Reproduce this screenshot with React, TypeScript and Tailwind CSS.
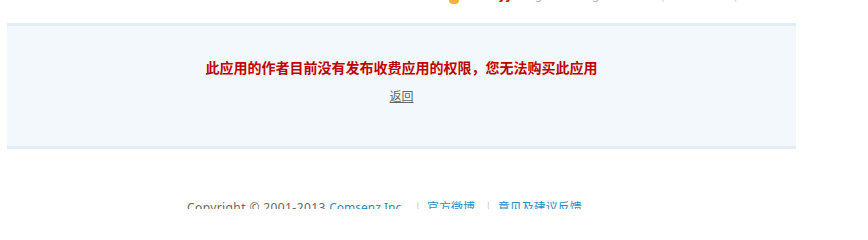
const cjk = { fontFamily: '"Noto Sans", "Noto Sans CJK SC", sans-serif' };

export default function App() {
  return (
    <div className="w-[868px] h-[209px] overflow-hidden bg-white" style={cjk}>
      {/* cut-off toolbar row above */}
      <div className="h-[5px] overflow-hidden">
        <div className="-mt-[14px] flex items-end text-[12px] leading-[18px] text-[#bbb]">
          <span className="ml-[449px] inline-block w-[10px] h-[10px] rounded-sm bg-[#f0b43c]" />
          <span className="ml-[40px] font-bold text-[#c00]">yy</span>
          <span className="ml-[22px]">g</span>
          <span className="ml-[50px]">g</span>
          <span className="ml-[60px] text-[#ccc]">|</span>
          <span className="ml-[66px] text-[#ccc]">|</span>
        </div>
      </div>

      {/* notice box */}
      <div className="ml-[7px] mt-[18px] w-[789px] border-y-[3px] border-[#e3edf6] bg-[#f2f8fc] pt-[32px] pb-[40px] text-center">
        <p className="text-[14px] leading-[20px] font-bold text-[#c00000]">
          此应用的作者目前没有发布收费应用的权限，您无法购买此应用
        </p>
        <p className="mt-[10px] text-[12px] leading-[18px]">
          <a href="#" className="text-[#666] underline">返回</a>
        </p>
      </div>

      {/* footer */}
      <div className="mt-[50px] pl-[187px] flex items-center text-[12px] leading-[18px] text-[#666] whitespace-nowrap">
        <span className="tracking-[0.4px]">Copyright © 2001-2013&nbsp;</span>
        <a href="#" className="text-[#2a8dc8]">Comsenz Inc.</a>
        <span className="ml-[10px] mr-[6px] text-[#ccc]">|</span>
        <a href="#" className="text-[#2a8dc8]">官方微博</a>
        <span className="ml-[10px] mr-[6px] text-[#ccc]">|</span>
        <a href="#" className="text-[#2a8dc8]">意见及建议反馈</a>
      </div>
    </div>
  );
}
